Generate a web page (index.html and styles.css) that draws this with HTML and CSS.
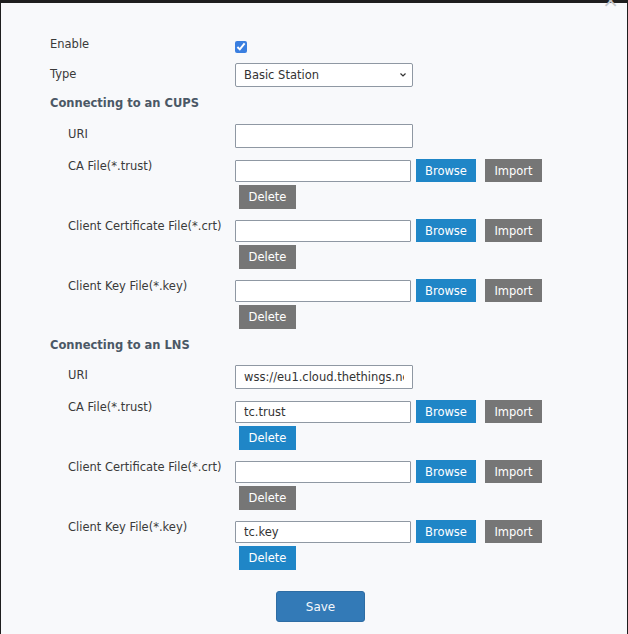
FILE: index.html
```html
<!DOCTYPE html>
<html>
<head>
<meta charset="utf-8">
<link rel="stylesheet" href="styles.css">
</head>
<body>
<div class="modal">
  <span class="close">×</span>
  <form class="form">
    <div class="row row-enable">
      <label class="lbl">Enable</label>
      <div class="ctl"><input type="checkbox" class="check" checked></div>
    </div>
    <div class="row row-type">
      <label class="lbl lbl-type">Type</label>
      <div class="ctl">
        <div class="select">
          <span>Basic Station</span>
          <svg class="chev" width="8" height="6" viewBox="0 0 8 6"><path d="M1.5 1.5 L4 4 L6.5 1.5" fill="none" stroke="#333" stroke-width="1.2"/></svg>
        </div>
      </div>
    </div>

    <h3 class="section section-first">Connecting to an CUPS</h3>
    <div class="row sub row-uri">
      <label class="lbl lbl-uri">URI</label>
      <div class="ctl"><input type="text" class="text text-wide" value=""></div>
    </div>
    <div class="row sub row-file">
      <label class="lbl">CA File(*.trust)</label>
      <div class="ctl">
        <div class="file-line"><input type="text" class="text text-file" value=""><button type="button" class="btn btn-blue btn-browse">Browse</button><button type="button" class="btn btn-gray btn-import">Import</button></div>
        <button type="button" class="btn btn-gray btn-del">Delete</button>
      </div>
    </div>
    <div class="row sub row-file">
      <label class="lbl">Client Certificate File(*.crt)</label>
      <div class="ctl">
        <div class="file-line"><input type="text" class="text text-file" value=""><button type="button" class="btn btn-blue btn-browse">Browse</button><button type="button" class="btn btn-gray btn-import">Import</button></div>
        <button type="button" class="btn btn-gray btn-del">Delete</button>
      </div>
    </div>
    <div class="row sub row-file">
      <label class="lbl">Client Key File(*.key)</label>
      <div class="ctl">
        <div class="file-line"><input type="text" class="text text-file" value=""><button type="button" class="btn btn-blue btn-browse">Browse</button><button type="button" class="btn btn-gray btn-import">Import</button></div>
        <button type="button" class="btn btn-gray btn-del">Delete</button>
      </div>
    </div>

    <h3 class="section">Connecting to an LNS</h3>
    <div class="row sub row-uri">
      <label class="lbl lbl-uri">URI</label>
      <div class="ctl"><input type="text" class="text text-wide" value="wss://eu1.cloud.thethings.network:8887"></div>
    </div>
    <div class="row sub row-file">
      <label class="lbl">CA File(*.trust)</label>
      <div class="ctl">
        <div class="file-line"><input type="text" class="text text-file" value="tc.trust"><button type="button" class="btn btn-blue btn-browse">Browse</button><button type="button" class="btn btn-gray btn-import">Import</button></div>
        <button type="button" class="btn btn-blue btn-del">Delete</button>
      </div>
    </div>
    <div class="row sub row-file">
      <label class="lbl">Client Certificate File(*.crt)</label>
      <div class="ctl">
        <div class="file-line"><input type="text" class="text text-file" value=""><button type="button" class="btn btn-blue btn-browse">Browse</button><button type="button" class="btn btn-gray btn-import">Import</button></div>
        <button type="button" class="btn btn-gray btn-del">Delete</button>
      </div>
    </div>
    <div class="row sub row-file">
      <label class="lbl">Client Key File(*.key)</label>
      <div class="ctl">
        <div class="file-line"><input type="text" class="text text-file" value="tc.key"><button type="button" class="btn btn-blue btn-browse">Browse</button><button type="button" class="btn btn-gray btn-import">Import</button></div>
        <button type="button" class="btn btn-blue btn-del">Delete</button>
      </div>
    </div>

    <div class="actions"><button type="button" class="save">Save</button></div>
  </form>
</div>
</body>
</html>
```

FILE: styles.css
```css
html, body {
  margin: 0;
  padding: 0;
  background: #1e1e1e;
  overflow: hidden;
}
body {
  font-family: "DejaVu Sans", Verdana, sans-serif;
  font-size: 11.5px;
  color: #3a3a3a;
}
.modal {
  position: relative;
  margin: 3px 0 0 1px;
  width: 626px;
  height: 660px;
  background: #f8f9fb;
}
.close {
  position: absolute;
  top: -13px;
  right: 8px;
  font-size: 20px;
  line-height: 20px;
  color: #c4c6c9;
}
.form {
  margin: 0;
  padding: 32px 0 0 49px;
}
.row {
  display: grid;
  grid-template-columns: 185px auto;
  align-items: start;
}
.lbl {
  display: block;
  line-height: 17px;
  padding-top: 1px;
  white-space: nowrap;
}
.sub .lbl {
  padding-left: 18px;
}
.ctl {
  display: flex;
  flex-direction: column;
  align-items: flex-start;
}
.check {
  margin: 6px 0 0 0;
  width: 12px;
  height: 12px;
  accent-color: #3a7fe0;
}
.row-type {
  margin-top: 10px;
}
.lbl-type {
  padding-top: 3px;
}
.select {
  box-sizing: border-box;
  width: 178px;
  height: 24px;
  border: 1px solid #8f98a3;
  border-radius: 2px;
  background: #ffffff;
  display: flex;
  align-items: center;
  justify-content: space-between;
  padding: 0 5px 0 8px;
  color: #333;
}
.chev {
  display: block;
}
.section {
  margin: 8px 0 11px 0;
  font-size: 11.5px;
  line-height: 17px;
  font-weight: bold;
  color: #4b5866;
}
.section-first {
  margin-bottom: 12px;
}
.lbl-uri {
  padding-top: 2px;
}
.text {
  box-sizing: border-box;
  margin: 0;
  border: 1px solid #8f98a3;
  border-radius: 1px;
  background: #ffffff;
  font-family: "DejaVu Sans", Verdana, sans-serif;
  font-size: 11.5px;
  color: #333;
  padding: 0 8px;
  outline: none;
}
.text-wide {
  width: 178px;
  height: 24px;
}
.row-file {
  margin-top: 9px;
}
.row-file + .row-file {
  margin-top: 8px;
}
.file-line {
  display: flex;
  align-items: flex-start;
  margin-top: 2px;
}
.text-file {
  width: 176px;
  height: 22px;
  margin-top: 1px;
}
.btn {
  box-sizing: border-box;
  border: none;
  border-radius: 0;
  margin: 0;
  padding: 0;
  font-family: "DejaVu Sans", Verdana, sans-serif;
  font-size: 11.5px;
  color: #ffffff;
  cursor: pointer;
}
.btn-blue {
  background: #1f86c7;
}
.btn-gray {
  background: #767676;
}
.btn-browse {
  width: 60px;
  height: 23px;
  margin-left: 5px;
}
.btn-import {
  width: 57px;
  height: 23px;
  margin-left: 9px;
}
.btn-del {
  width: 57px;
  height: 24px;
  margin: 3px 0 0 4px;
}
.actions {
  margin-top: 21px;
  padding-left: 226px;
}
.save {
  box-sizing: border-box;
  width: 89px;
  height: 31px;
  background: #337ab7;
  border: 1px solid #2e6da4;
  border-radius: 3px;
  color: #f4f7fb;
  font-family: "DejaVu Sans", Verdana, sans-serif;
  font-size: 12px;
  cursor: pointer;
}
```
